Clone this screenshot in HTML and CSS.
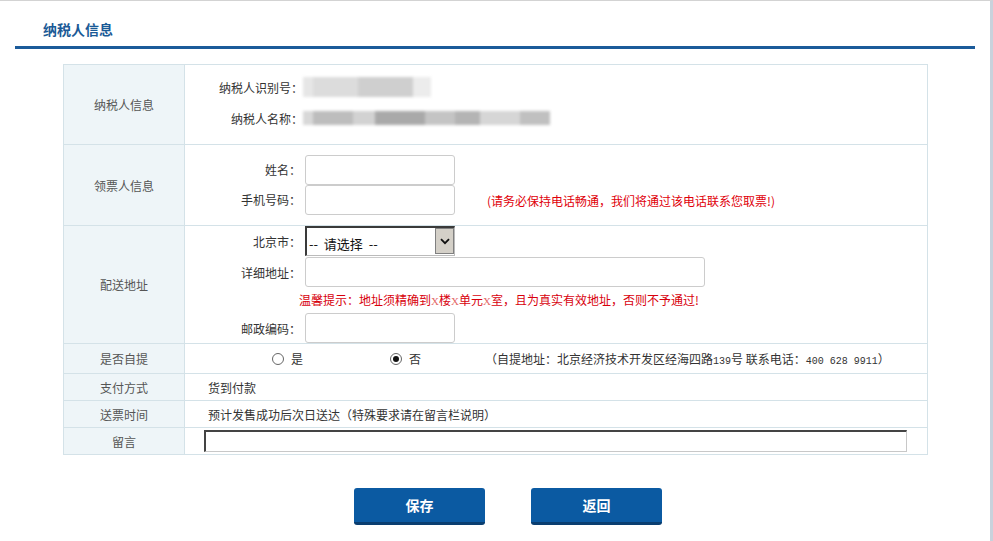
FILE: index.html
```html
<!DOCTYPE html>
<html lang="zh-CN">
<head>
<meta charset="utf-8">
<title>纳税人信息</title>
<link rel="stylesheet" href="styles.css">
</head>
<body>
<div class="page">
  <div class="title-bar"><h2 class="title">纳税人信息</h2></div>

  <table class="info">
    <colgroup><col class="col-label"><col class="col-body"></colgroup>
    <tr class="r-tax">
      <th>纳税人信息</th>
      <td>
        <div class="lines">
          <div class="line"><span class="key">纳税人识别号：</span><span class="blur blur-id"><i class="b1"></i><i class="b2"></i><i class="b3"></i><i class="b4"></i></span></div>
          <div class="line"><span class="key">纳税人名称：</span><span class="blur blur-name"><i class="c1"></i><i class="c2"></i><i class="c3"></i><i class="c4"></i><i class="c5"></i><i class="c6"></i><i class="c7"></i><i class="c8"></i></span></div>
        </div>
      </td>
    </tr>
    <tr class="r-recv">
      <th>领票人信息</th>
      <td>
        <div class="form recv-form">
          <span class="key">姓名：</span><span class="field"><input class="text short" type="text"></span><span></span>
          <span class="key">手机号码：</span><span class="field"><input class="text short" type="text"></span><span class="warn">(请务必保持电话畅通，我们将通过该电话联系您取票!)</span>
        </div>
      </td>
    </tr>
    <tr class="r-addr">
      <th>配送地址</th>
      <td>
        <div class="form addr-form">
          <span class="key">北京市：</span>
          <span class="field"><span class="select"><span class="select-text">--&nbsp; 请选择 &nbsp;--</span><span class="select-arrow"><svg width="10" height="7" viewBox="0 0 10 7"><path d="M1 1.2 L5 5.2 L9 1.2" fill="none" stroke="#111" stroke-width="1.8"/></svg></span></span></span>
          <span class="key">详细地址：</span>
          <span class="field"><input class="text long" type="text"></span>
          <span class="hint">温馨提示：地址须精确到<b>X</b>楼<b>X</b>单元<b>X</b>室，且为真实有效地址，否则不予通过!</span>
          <span class="key">邮政编码：</span>
          <span class="field"><input class="text short" type="text"></span>
        </div>
      </td>
    </tr>
    <tr class="r-self">
      <th>是否自提</th>
      <td>
        <div class="radios">
          <span class="radio"></span><span class="radio-label">是</span>
          <span class="radio checked"></span><span class="radio-label">否</span>
          <span class="self-note">（自提地址：北京经济技术开发区经海四路<span class="num">139</span>号 联系电话：<span class="num">400 628 9911</span>）</span>
        </div>
      </td>
    </tr>
    <tr class="r-pay">
      <th>支付方式</th>
      <td><span class="plain">货到付款</span></td>
    </tr>
    <tr class="r-time">
      <th>送票时间</th>
      <td><span class="plain">预计发售成功后次日送达（特殊要求请在留言栏说明）</span></td>
    </tr>
    <tr class="r-msg">
      <th>留言</th>
      <td><textarea class="msg"></textarea></td>
    </tr>
  </table>

  <div class="actions">
    <button class="btn" type="button">保存</button>
    <button class="btn" type="button">返回</button>
  </div>
</div>
</body>
</html>
```
FILE: styles.css
```css
* { box-sizing: border-box; }
html, body { margin: 0; padding: 0; background: #fff; }
body {
  font-family: "Noto Sans CJK SC", "Noto Sans", sans-serif;
  font-size: 12px;
  color: #333;
}
.page {
  width: 993px;
  height: 541px;
  border-top: 1px solid #d3d3d3;
  border-right: 3px solid #c9d2dc;
  overflow: hidden;
}
.title-bar {
  margin-left: 15px;
  width: 960px;
  height: 48px;
  padding: 13px 0 0 28px;
  border-bottom: 3px solid #1b5b9a;
}
.title {
  margin: 0;
  font-size: 14px;
  line-height: 30px;
  font-weight: bold;
  color: #1a5a96;
}

.info {
  margin: 15px 0 0 63px;
  width: 865px;
  border-collapse: collapse;
  table-layout: fixed;
}
.col-label { width: 121px; }
.info th, .info td {
  border: 1px solid #d4e2e8;
  padding: 0;
  vertical-align: middle;
}
.info th {
  background: #eef5f8;
  font-weight: normal;
  color: #555;
  text-align: center;
}
.r-tax td, .r-tax th { height: 80px; }
.r-recv td, .r-recv th { height: 81px; }
.r-addr td, .r-addr th { height: 116px; }
.r-self td, .r-self th { height: 30px; }
.r-pay td, .r-pay th { height: 27px; }
.r-time td, .r-time th { height: 27px; }
.r-msg td, .r-msg th { height: 27px; }

.key { text-align: right; color: #333; white-space: nowrap; }

.lines { padding: 0 0 4px 0; }
.line { display: grid; grid-template-columns: 118px auto; align-items: center; height: 31px; }
.blur { display: flex; align-items: center; filter: blur(1.6px); margin-left: 0; }
.blur i { display: block; height: 14px; }
.blur-id { height: 22px; }
.blur-id i { height: 20px; }
.b1 { width: 10px; background: #e6e6e6; }
.b2 { width: 45px; background: #dcdcdc; }
.b3 { width: 55px; background: #cfcfcf; }
.b4 { width: 18px; background: #ececec; }
.c1 { width: 10px; background: #d8d8d8; }
.c2 { width: 40px; background: #bdbdbd; }
.c3 { width: 22px; background: #d2d2d2; }
.c4 { width: 50px; background: #a9a9a9; }
.c5 { width: 30px; background: #c4c4c4; }
.c6 { width: 25px; background: #b4b4b4; }
.c7 { width: 40px; background: #d6d6d6; }
.c8 { width: 30px; background: #c0c0c0; }

.form {
  display: grid;
  grid-template-columns: 116px auto 1fr;
  column-gap: 4px;
  align-items: center;
}
.recv-form { row-gap: 0; padding: 0 0 1px; }
.recv-form .warn { padding-left: 28px; color: #e0000a; padding-top: 2px; }
.addr-form { grid-template-columns: 116px 1fr; row-gap: 1px; }
.addr-form .hint {
  grid-column: 1 / span 2;
  padding-left: 114px;
  color: #d8000c;
  height: 24px;
  line-height: 24px;
}
.hint b { font-family: "Liberation Serif", serif; font-weight: normal; font-size: 11px; color: #e46a6a; }

.text {
  display: block;
  height: 30px;
  border: 1px solid #cccccc;
  border-radius: 3px;
  background: #fff;
  padding: 0 4px;
  font: inherit;
  outline: none;
}
.text.short { width: 150px; }
.text.long { width: 400px; }

.select {
  position: relative;
  display: block;
  width: 150px;
  height: 30px;
  border-top: 2px solid #3a3a3a;
  border-left: 2px solid #3a3a3a;
  border-right: 1px solid #bbb;
  border-bottom: 1px solid #bbb;
  background: #fff;
}
.select-text {
  position: absolute;
  left: 2px;
  top: 8px;
  font-size: 13px;
  line-height: 16px;
  color: #111;
  white-space: pre;
}
.select-arrow {
  position: absolute;
  right: 0;
  top: 0;
  width: 19px;
  height: 26px;
  background: #d4d0c8;
  border: 1px solid #808080;
  display: flex;
  align-items: center;
  justify-content: center;
}

.radios { display: flex; align-items: center; padding-left: 87px; color: #333; }
.radio {
  width: 12px;
  height: 12px;
  border: 1px solid #666;
  border-radius: 50%;
  background: #fff;
  position: relative;
}
.radio.checked::after {
  content: "";
  position: absolute;
  left: 2px; top: 2px;
  width: 6px; height: 6px;
  border-radius: 50%;
  background: #111;
}
.radio-label { margin-left: 7px; }
.radio-label:nth-of-type(2) { margin-right: 87px; }
.radio-label:nth-of-type(4) { margin-right: 64px; }
.self-note { color: #333; }
.num { font-family: "Liberation Mono", monospace; font-size: 10px; }

.plain { padding-left: 23px; color: #333; }

.msg {
  display: block;
  margin-left: 19px;
  width: 703px;
  height: 22px;
  resize: none;
  border-top: 2px solid #444;
  border-left: 2px solid #444;
  border-right: 1px solid #c8c8c8;
  border-bottom: 1px solid #c8c8c8;
  padding: 0;
  outline: none;
}

.actions {
  display: flex;
  gap: 46px;
  padding-left: 354px;
  margin-top: 33px;
}
.btn {
  width: 131px;
  height: 37px;
  border: 0;
  border-bottom: 3px solid #0a3e70;
  border-radius: 3px;
  background: #0b5aa2;
  color: #fff;
  font-family: "Noto Sans CJK SC", sans-serif;
  font-size: 14px;
  font-weight: bold;
  padding: 0;
}
```
